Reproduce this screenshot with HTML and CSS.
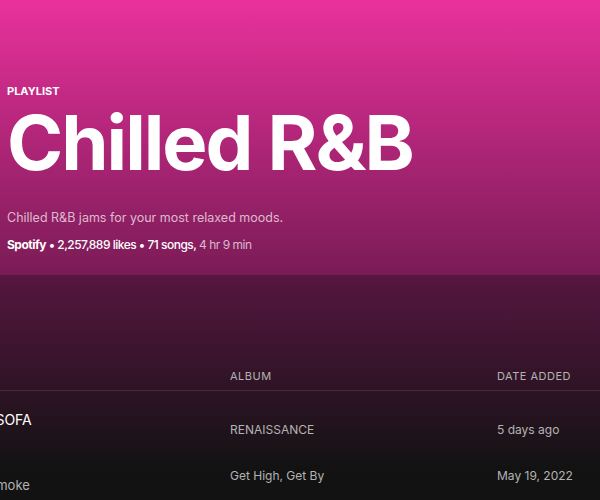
FILE: index.html
```html
<!DOCTYPE html>
<html lang="en">
<head>
    <meta charset="UTF-8">
    <title>Chilled R&amp;B</title>
    <link rel="stylesheet" href="styles.css">
</head>
<body>

<header class="hero">
    <p class="kind">PLAYLIST</p>
    <h1 class="title">Chilled R&amp;B</h1>
    <p class="desc">Chilled R&amp;B jams for your most relaxed moods.</p>
    <p class="meta"><strong>Spotify</strong> &bull; 2,257,889 likes &bull; 71 songs, <span class="dim">4 hr 9 min</span></p>
</header>

<section class="tracks">
    <div class="row head">
        <div class="cell track">TITLE</div>
        <div class="cell album">ALBUM</div>
        <div class="cell date">DATE ADDED</div>
    </div>
    <div class="row">
        <div class="cell track">
            <div class="name">PLASTIC OFF THE SOFA</div>
            <div class="artist">Beyonc&eacute;</div>
        </div>
        <div class="cell album">RENAISSANCE</div>
        <div class="cell date">5 days ago</div>
    </div>
    <div class="row">
        <div class="cell track">
            <div class="name">Jerome</div>
            <div class="artist">Ravyn Lenae, Holy Smoke</div>
        </div>
        <div class="cell album">Get High, Get By</div>
        <div class="cell date">May 19, 2022</div>
    </div>
</section>

</body>
</html>
```

FILE: styles.css
```css
html, body {
    margin: 0;
    padding: 0;
    height: 100%;
    overflow: hidden;
    background: #121212;
    font-family: Inter, "Noto Sans", sans-serif;
    color: #ffffff;
}
.hero {
    height: 275px;
    padding: 0 7px;
    box-sizing: border-box;
    background: linear-gradient(180deg, #e9319c 0%, #7a1b56 100%);
    overflow: hidden;
}
.kind {
    margin: 0;
    padding-top: 85px;
    font-size: 11px;
    font-weight: 700;
    line-height: 12px;
}
.title {
    margin: 0;
    font-size: 76px;
    font-weight: 700;
    letter-spacing: -2px;
    line-height: 90px;
}
.desc {
    margin: 23px 0 0;
    font-size: 12.5px;
    line-height: 16px;
    color: rgba(255, 255, 255, 0.7);
}
.meta {
    margin: 11px 0 0;
    font-size: 12px;
    line-height: 16px;
    font-weight: 500;
    letter-spacing: -0.5px;
}
.meta .dim {
    color: rgba(255, 255, 255, 0.7);
    font-weight: 400;
}
.tracks {
    height: 225px;
    background: linear-gradient(180deg, #561640 0%, #121212 195px);
    padding-top: 94px;
    box-sizing: border-box;
}
.row {
    display: grid;
    grid-template-columns: 360px 267px 120px;
    margin-left: -130px;
    height: 46px;
    align-items: center;
    font-size: 12px;
    color: #b3b3b3;
}
.row.head {
    height: 21px;
    align-items: start;
    border-bottom: 1px solid rgba(255, 255, 255, 0.1);
    font-size: 11px;
    letter-spacing: 0.5px;
    margin-bottom: 15px;
}
.name {
    font-size: 14px;
    line-height: 17px;
    color: #ffffff;
    margin-bottom: 4px;
}
.artist {
    font-size: 13px;
    line-height: 15px;
}
```
